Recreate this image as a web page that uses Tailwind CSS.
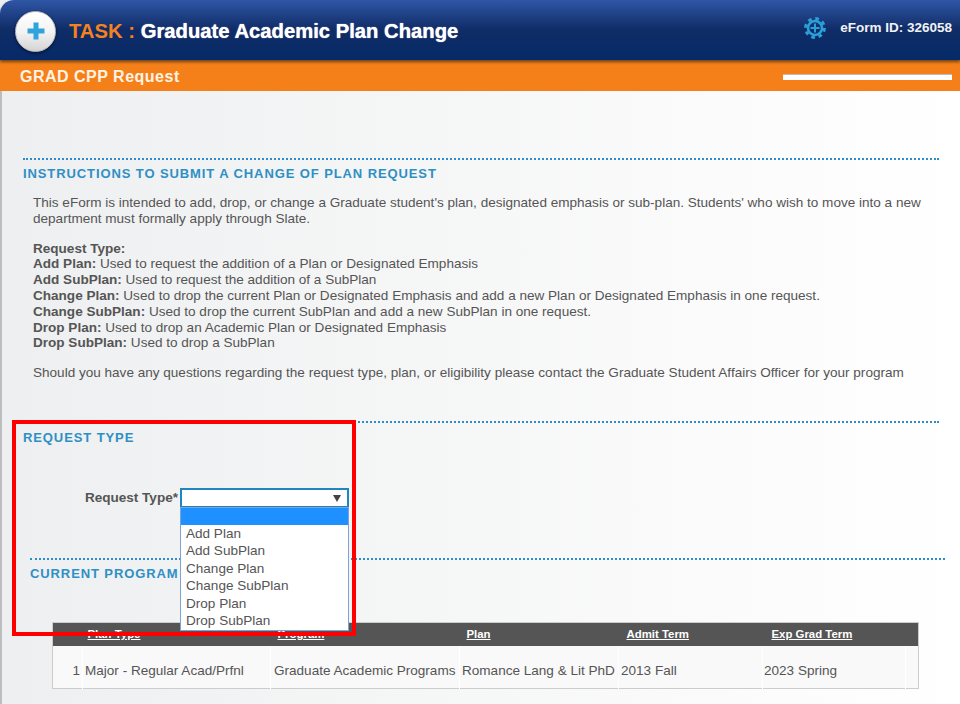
<!DOCTYPE html>
<html>
<head>
<meta charset="utf-8">
<script src="https://cdn.jsdelivr.net/npm/@tailwindcss/browser@4"></script>
</head>
<body class="m-0 bg-white">
<div class="relative w-[960px] h-[704px] overflow-hidden font-['Liberation_Sans',Arial,sans-serif] text-[#555] bg-gradient-to-r from-[#eeeff0] to-[#ffffff]">
  <header class="relative z-10 h-[60px] flex items-center justify-between rounded-tl-[14px] bg-gradient-to-b from-[#2f56a6] via-[#0f2c66] via-50% to-[#062a68] shadow-[0_2px_3px_rgba(60,40,20,0.7)]">
    <div class="flex items-center pl-[15px] pt-[2px]">
      <div class="w-[41px] h-[41px] rounded-full border border-[#bbb] bg-gradient-to-b from-white via-[#f4f4f4] via-50% to-[#d4d4d4] shadow-[0_1px_3px_rgba(0,0,0,0.6)] flex items-center justify-center">
        <svg width="20" height="20" viewBox="0 0 20 20"><path d="M10 1.5v17M1.5 10h17" stroke="#2ea3dc" stroke-width="5"/></svg>
      </div>
      <h1 class="ml-[13px] text-[20.25px] font-bold leading-none text-white [text-shadow:0_0_1px_#fff]"><span class="text-[#f58220] [text-shadow:none]">TASK : </span>Graduate Academic Plan Change</h1>
    </div>
    <div class="flex items-center pr-[8px] pb-[4px]">
      <svg width="22" height="22" viewBox="0 0 22 22" class="mr-[14px]">
        <circle cx="11" cy="11" r="9.4" fill="none" stroke="#2a9fd8" stroke-width="3" stroke-dasharray="3.7 3.68"/>
        <circle cx="11" cy="11" r="7" fill="none" stroke="#2a9fd8" stroke-width="2.6"/>
        <path d="M11 6.5v9M6.5 11h9" stroke="#2a9fd8" stroke-width="2"/>
      </svg>
      <span class="text-[13.5px] font-bold text-[#f0f2f6]">eForm ID: 326058</span>
    </div>
  </header>
  <div class="h-[31px] flex items-center justify-between bg-[#f58019] pl-[20px] pr-[8px] pt-[2px]">
    <span class="text-[16px] font-bold text-[#fff3e6] tracking-[0.5px]">GRAD CPP Request</span>
    <div class="w-[169px] h-[6px] bg-white border-t border-[#bbb]"></div>
  </div>
  <main class="h-[613px] pt-[67px] pl-[23px] pr-[21px] border-l-2 border-[#bdbdbd]">
    <section class="ml-[-2px]">
      <div class="border-t-2 border-dotted border-[#2a8fc9]"></div>
      <h2 class="mt-[6px] text-[13px] leading-[16px] font-bold tracking-[0.9px] text-[#2e8fc4]">INSTRUCTIONS TO SUBMIT A CHANGE OF PLAN REQUEST</h2>
      <div class="mt-[13px] pl-[10px] text-[13.55px] leading-[15.8px]">
        <p>This eForm is intended to add, drop, or change a Graduate student's plan, designated emphasis or sub-plan. Students' who wish to move into a new department must formally apply through Slate.</p>
        <p class="mt-[14px]"><b>Request Type:</b><br>
        <b>Add Plan:</b> Used to request the addition of a Plan or Designated Emphasis<br>
        <b>Add SubPlan:</b> Used to request the addition of a SubPlan<br>
        <b>Change Plan:</b> Used to drop the current Plan or Designated Emphasis and add a new Plan or Designated Emphasis in one request.<br>
        <b>Change SubPlan:</b> Used to drop the current SubPlan and add a new SubPlan in one request.<br>
        <b>Drop Plan:</b> Used to drop an Academic Plan or Designated Emphasis<br>
        <b>Drop SubPlan:</b> Used to drop a SubPlan</p>
        <p class="mt-[14px]">Should you have any questions regarding the request type, plan, or eligibility please contact the Graduate Student Affairs Officer for your program</p>
      </div>
    </section>
    <section class="mt-[40px] ml-[-2px]">
      <div class="border-t-2 border-dotted border-[#2a8fc9]"></div>
      <h2 class="mt-[7px] text-[13px] leading-[16px] font-bold tracking-[0.9px] text-[#2e8fc4]">REQUEST TYPE</h2>
      <div class="mt-[42px] flex items-center">
        <label class="w-[155px] text-right text-[13.55px] font-bold leading-[18px]">Request Type*</label>
        <div class="ml-[2px] w-[169px] h-[20px] border-2 border-[#1f86c0] bg-white flex items-center justify-end pr-[6px]">
          <svg width="8" height="8" viewBox="0 0 8 8"><path d="M0 1h8L4 8z" fill="#444"/></svg>
        </div>
      </div>
    </section>
    <section class="mt-[50px] ml-[5px]">
      <div class="border-t-2 border-dotted border-[#2a8fc9] w-[915px]"></div>
      <h2 class="mt-[6px] text-[13px] leading-[16px] font-bold tracking-[0.9px] text-[#2e8fc4]">CURRENT PROGRAM</h2>
      <table class="mt-[40px] ml-[22px] w-[867px] border border-[#ccc] border-collapse table-fixed text-[13.55px] bg-[#f9f9f9]">
        <thead>
          <tr class="h-[24px] bg-[#555] text-left text-[11.4px] font-bold text-white underline">
            <th class="w-[30px]"></th><th class="w-[188px] pl-[5px]">Plan Type</th><th class="w-[189px] pl-[7px]">Program</th><th class="w-[159px] pl-[7px]">Plan</th><th class="w-[144px] pl-[8px]">Admit Term</th><th class="w-[143px] pl-[9px]">Exp Grad Term</th><th></th>
          </tr>
        </thead>
        <tbody>
          <tr class="h-[42px]">
            <td class="pr-[2px] pt-[7px] text-right border-r border-white">1</td><td class="pl-[2px] pt-[7px] border-r border-white whitespace-nowrap">Major - Regular Acad/Prfnl</td><td class="pl-[3px] pt-[7px] border-r border-white whitespace-nowrap">Graduate Academic Programs</td><td class="pl-[2px] pt-[7px] border-r border-white whitespace-nowrap">Romance Lang &amp; Lit PhD</td><td class="pl-[2px] pt-[7px] border-r border-white">2013 Fall</td><td class="pl-[1px] pt-[7px] border-r border-white">2023 Spring</td><td></td>
          </tr>
        </tbody>
      </table>
    </section>
  </main>
  <ul class="absolute z-20 left-[180px] top-[507px] w-[169px] h-[124px] bg-white border border-[#7da2d8] text-[13.55px] text-[#555]">
    <li class="h-[17px] bg-[#1e90ff]"></li>
    <li class="h-[17px] leading-[17px] pl-[5px]">Add Plan</li>
    <li class="h-[18px] leading-[18px] pl-[5px]">Add SubPlan</li>
    <li class="h-[17px] leading-[17px] pl-[5px]">Change Plan</li>
    <li class="h-[18px] leading-[18px] pl-[5px]">Change SubPlan</li>
    <li class="h-[17px] leading-[17px] pl-[5px]">Drop Plan</li>
    <li class="h-[17px] leading-[17px] pl-[5px]">Drop SubPlan</li>
  </ul>
  <div class="absolute z-10 left-[12px] top-[420px] w-[344px] h-[216px] border-[4px] border-[#fe0000]"></div>
</div>
</body>
</html>
